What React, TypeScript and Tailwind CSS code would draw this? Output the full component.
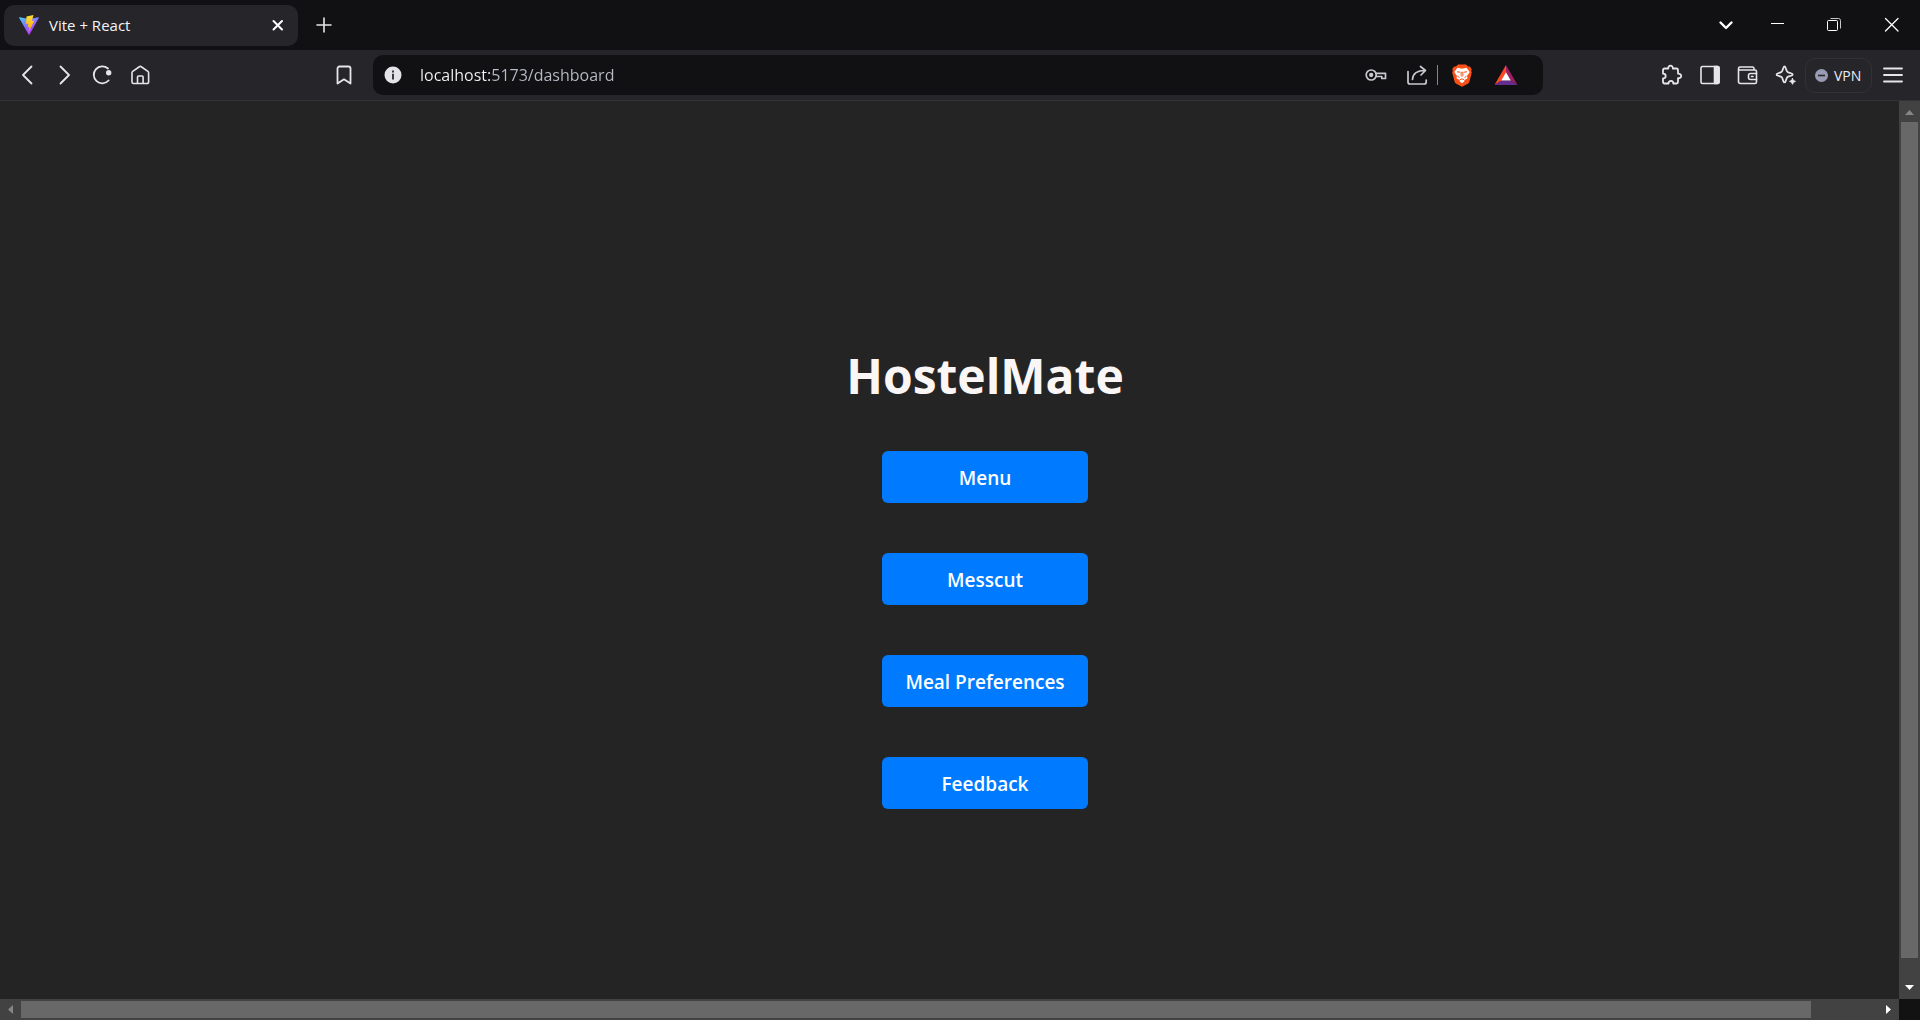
import type { ReactNode } from "react";

const LINKS = ["Menu", "Messcut", "Meal Preferences", "Feedback"];

function IconButton({ label, className = "w-[38px]", children }: { label: string; className?: string; children: ReactNode }) {
  return (
    <button type="button" aria-label={label} className={`flex h-10 shrink-0 items-center justify-center ${className}`}>
      {children}
    </button>
  );
}

function Stroke({ children, width = 1.6, className = "size-6 text-[#e6e6ea]" }: { children: ReactNode; width?: number; className?: string }) {
  return (
    <svg viewBox="0 0 24 24" fill="none" stroke="currentColor" strokeWidth={width} strokeLinecap="round" strokeLinejoin="round" className={className} aria-hidden="true">
      {children}
    </svg>
  );
}

function ViteLogo() {
  return (
    <svg viewBox="0 0 20 20" className="size-5 shrink-0" aria-hidden="true">
      <defs>
        <linearGradient id="vite-body" x1="0" y1="0" x2="0.6" y2="1">
          <stop offset="0" stopColor="#41d1ff" />
          <stop offset="0.55" stopColor="#8f6bff" />
          <stop offset="1" stopColor="#bd34fe" />
        </linearGradient>
        <linearGradient id="vite-bolt" x1="0" y1="0" x2="0" y2="1">
          <stop offset="0" stopColor="#ffdd35" />
          <stop offset="1" stopColor="#ffa800" />
        </linearGradient>
      </defs>
      <path d="M19.8 3 10.5 19.6a.5.5 0 0 1-.9 0L.2 3a.5.5 0 0 1 .5-.8L10 3.9l9.3-1.7a.5.5 0 0 1 .5.8Z" fill="url(#vite-body)" />
      <path d="M14.500.1 7.500 1.400 7 9.100l2.400-.5-.8 3.600 1.900-.5L9.500 17l6-11.500-2.600.5Z" fill="url(#vite-bolt)" />
    </svg>
  );
}

function BraveLogo() {
  return (
    <svg viewBox="0 0 20 23" className="h-[23px] w-5" aria-hidden="true">
      <path d="M6 .5h8L16 2.600l1.900-.1 1.900 2.700-.6 1.500.6 1.900-2.300 8.600c-.3 1.200-.9 1.900-1.700 2.500L10 22.800l-5.800-3.100c-.8-.6-1.400-1.300-1.700-2.500L.2 8.600l.6-1.900-.6-1.500 1.900-2.700 1.900.1Z" fill="#fb5015" />
      <path d="M5.500 3.800 10 4.800l4.500-1 3.200 4.200-2.700 4 .5 2.300-3 1.600-.3 1.600L10 19.300l-2.200-1.800-.3-1.600-3-1.600.5-2.300L2.300 8Z" fill="#fff" />
      <path d="M5 7.800 8.300 8.200M15 7.800 11.700 8.200M9.300 7.800 9 11.300l1 1.200 1-1.200-.3-3.500M5.500 12.200l2 1.300M14.500 12.200l-2 1.300M7.800 15.800l2.200-1 2.200 1" fill="none" stroke="#fb5015" strokeWidth="1" />
    </svg>
  );
}

function RewardsLogo() {
  return (
    <svg viewBox="0 0 24 20" className="h-5 w-6" aria-hidden="true">
      <path d="M12 0 .5 20 7.500 15.500 12 7.500Z" fill="#ff4724" />
      <path d="M12 0v7.500l4.500 8 7 4.500Z" fill="#9e1f63" />
      <path d="M.5 20 7.500 15.500h9l7 4.500Z" fill="#662d91" />
      <path d="m12 7.200 4.800 8.300H7.200Z" fill="#fff" />
    </svg>
  );
}

function TabStrip() {
  return (
    <header className="flex h-[50px] shrink-0 items-center bg-[#111113] pl-1">
      <div className="flex h-[41px] w-[294px] items-center rounded-[10px] bg-[#25252a] pr-1 pl-[15px]">
        <ViteLogo />
        <span className="ml-[10px] flex-1 text-[15px] text-[#f4f4f6]">Vite + React</span>
        <IconButton label="Close tab" className="w-8">
          <Stroke width={2} className="size-6 text-white">
            <path d="m7.500 8 8.500 8.500M16 8l-8.500 8.500" />
          </Stroke>
        </IconButton>
      </div>
      <IconButton label="New tab" className="ml-[7px] w-[38px]">
        <Stroke><path d="M12 5v14M5 12h14" /></Stroke>
      </IconButton>
      <div className="ml-auto flex">
        <IconButton label="Search tabs" className="w-[46px]">
          <Stroke width={2.4} className="size-6 text-white"><path d="m6.500 9.500 5.500 5.500 5.500-5.500" /></Stroke>
        </IconButton>
        <IconButton label="Minimize" className="w-[57px]">
          <svg viewBox="0 0 24 24" className="size-6" aria-hidden="true"><path d="M5 10h13v1H5Z" fill="#fff" /></svg>
        </IconButton>
        <IconButton label="Restore" className="w-[57px]">
          <svg viewBox="0 0 24 24" fill="none" stroke="#fff" className="size-6" aria-hidden="true">
            <path d="M7.500 5.500h8a2 2 0 0 1 2 2v8" stroke="#c8c8c8" />
            <rect x="4.500" y="7.500" width="10" height="10" rx="1" />
          </svg>
        </IconButton>
        <IconButton label="Close" className="w-[57px]">
          <Stroke width={1.300} className="size-6 text-white"><path d="m5.500 5.500 12.500 12.500M18 5.500 5.500 18" /></Stroke>
        </IconButton>
      </div>
    </header>
  );
}

function Toolbar() {
  return (
    <nav aria-label="Browser toolbar" className="flex h-[51px] shrink-0 items-center border-b border-[#323238] bg-[#25252a] px-2">
      <IconButton label="Back"><Stroke width={1.800}><path d="m16.500 3.500-8.500 8.500 8.500 8.500" /></Stroke></IconButton>
      <IconButton label="Forward"><Stroke width={1.800}><path d="m7.500 3.500 8.500 8.500-8.500 8.500" /></Stroke></IconButton>
      <IconButton label="Reload">
        <Stroke width={1.800}>
          <path d="M17 5.500a8.500 8.500 0 1 0 .6 12" />
          <circle cx="17.700" cy="9.800" r="1.800" fill="currentColor" />
        </Stroke>
      </IconButton>
      <IconButton label="Home">
        <Stroke>
          <path d="M3 9.800c0-.6.2-1 .7-1.400l7-4.900a1 1 0 0 1 1.200 0l7 4.900c.5.400.7.800.7 1.400v9.200a1.500 1.500 0 0 1-1.500 1.500H4.500A1.500 1.500 0 0 1 3 19Z" />
          <path d="M8.500 20v-6a1 1 0 0 1 1-1h3.600a1 1 0 0 1 1 1v6" />
        </Stroke>
      </IconButton>
      <IconButton label="Bookmark this tab" className="ml-[165px] w-[38px]">
        <Stroke width={1.800}><path d="M7.500 3.500h9a2 2 0 0 1 2 2v15L12 16.300l-6.500 4.200v-15a2 2 0 0 1 2-2Z" /></Stroke>
      </IconButton>
      <div className="ml-[10px] flex h-10 min-w-0 flex-1 items-center rounded-[10px] bg-[#111113] pr-[15px] pl-[11px]">
        <button type="button" aria-label="Site information" className="shrink-0">
          <svg viewBox="0 0 18 18" className="size-[18px]" aria-hidden="true">
            <circle cx="9" cy="9" r="8.500" fill="#e3e3e8" />
            <path d="M8 4.500h2v2H8ZM8 7.800h2v5.700H8Z" fill="#3a3a40" />
          </svg>
        </button>
        <input
          aria-label="Address"
          defaultValue="localhost:5173/dashboard"
          className="ml-[18px] min-w-0 flex-1 bg-[linear-gradient(90deg,#f5f5f7_70px,#b9bcc8_70px)] bg-clip-text text-[16px] text-transparent outline-none"
        />
        <IconButton label="Passwords" className="w-[42px]">
          <Stroke width={1.700} className="size-6 text-[#c9c9cf]">
            <circle cx="7.200" cy="12" r="5" />
            <circle cx="7.200" cy="12" r="1.300" fill="currentColor" />
            <path d="M12 10.300h9.500v5.200h-3.700v-2H12" />
          </Stroke>
        </IconButton>
        <IconButton label="Share" className="w-10">
          <Stroke width={1.700} className="size-6 text-[#c9c9cf]">
            <path d="M3 8.500V19a2 2 0 0 0 2 2h14.200a2 2 0 0 0 2-2v-2" />
            <path d="M7.500 16.500c.3-5.500 4-9 12.500-9M15.500 3.500l5 4-4.500 4.500" />
          </Stroke>
        </IconButton>
        <span className="mr-[2px] h-5 w-px bg-[#85858c]" />
        <IconButton label="Brave Shields" className="w-11"><BraveLogo /></IconButton>
        <IconButton label="Brave Rewards" className="w-11"><RewardsLogo /></IconButton>
      </div>
      <div className="ml-[110px] flex shrink-0 items-center">
        <IconButton label="Extensions">
          <Stroke width={1.800}>
            <path d="M4.500 5.500h3.800c-.2-1.600.7-2.900 2.200-2.900s2.500 1.300 2.300 2.900h3.700a1.500 1.500 0 0 1 1.500 1.500v3.600c1.700-.1 3.200.8 3.200 2.300s-1.500 2.500-3.200 2.300V19a1.500 1.500 0 0 1-1.500 1.500h-3.200c0-1.700-.8-2.600-2.200-2.600S8.500 18.900 8.500 20.500h-4A1.500 1.500 0 0 1 3 19v-3.500c1.700 0 2.700-.9 2.700-2.400S4.700 10.700 3 10.700V7a1.500 1.500 0 0 1 1.500-1.500Z" />
          </Stroke>
        </IconButton>
        <IconButton label="Side panel">
          <Stroke>
            <rect x="3" y="3.500" width="18" height="17" rx="1.500" />
            <path d="M16.500 3.500h3a1.500 1.500 0 0 1 1.500 1.500v14a1.500 1.500 0 0 1-1.500 1.500h-3Z" fill="currentColor" />
          </Stroke>
        </IconButton>
        <IconButton label="Wallet">
          <Stroke>
            <path d="M2.500 6v12.500a2 2 0 0 0 2 2H19a1.500 1.500 0 0 0 1.500-1.500V8.500A1.500 1.500 0 0 0 19 7H4A1.500 1.500 0 0 1 2.500 5.500 1.500 1.500 0 0 1 4 4h12.500A1.500 1.500 0 0 1 18 5.500V7" />
            <path d="M20.500 10.500h-6a2 2 0 0 0-2 2v2a2 2 0 0 0 2 2h6M15.500 13.500h1.500" />
          </Stroke>
        </IconButton>
        <IconButton label="Leo AI">
          <Stroke width={1.800}>
            <path d="M10.500 3.500c.6 0 .8.400 1 1l1.200 3.300c.3.800.7 1.200 1.500 1.500l3.500 1.200c1.200.4 1.200 1.600 0 2l-3.500 1.200c-.8.300-1.200.7-1.500 1.500l-1.200 3.300c-.4 1.200-1.600 1.200-2 0l-1.200-3.300c-.3-.8-.7-1.200-1.500-1.500l-3.300-1.200c-1.200-.4-1.200-1.600 0-2l3.300-1.200c.8-.3 1.200-.7 1.500-1.500l1.200-3.300c.2-.6.500-1 1-1Z" />
            <path d="m18.500 15.500.9 2 2 .9-2 .9-.9 2-.9-2-2-.9 2-.9Z" fill="currentColor" strokeWidth="1" />
          </Stroke>
        </IconButton>
        <button type="button" className="mr-[2px] flex h-[35px] w-[67px] items-center gap-[6px] rounded-[10px] border border-[#313137] pl-[9px] text-[14px] text-[#ececf0]">
          <svg viewBox="0 0 13 13" className="size-[13px]" aria-hidden="true">
            <circle cx="6.500" cy="6.500" r="6.500" fill="#9a9cb4" />
            <path d="M3 5.700h7v1.600H3Z" fill="#25252a" />
          </svg>
          VPN
        </button>
        <IconButton label="Menu">
          <Stroke width={1.800}><path d="M3 5.500h18M3 12h18M3 18.500h18" /></Stroke>
        </IconButton>
      </div>
    </nav>
  );
}

function Arrow({ d, className }: { d: string; className: string }) {
  return (
    <svg viewBox="0 0 21 21" className={`size-[21px] shrink-0 ${className}`} fill="currentColor" aria-hidden="true">
      <path d={d} />
    </svg>
  );
}

function VerticalScrollbar() {
  return (
    <div aria-hidden="true" className="flex w-[21px] shrink-0 flex-col items-center bg-[#424242]">
      <Arrow d="M10.500 9 15 14H6Z" className="text-[#868686]" />
      <div className="flex min-h-0 w-full flex-1 flex-col px-[2px]">
        <div className="h-[97.700%] bg-[#686868]" />
      </div>
      <Arrow d="M10.500 12 15 7H6Z" className="text-white" />
    </div>
  );
}

function HorizontalScrollbar() {
  return (
    <div aria-hidden="true" className="flex h-[21px] shrink-0 bg-[#424242]">
      <Arrow d="M8 10.500 13 6v9Z" className="text-[#868686]" />
      <div className="flex min-w-0 flex-1 py-[2px]">
        <div className="w-[96.400%] bg-[#686868]" />
      </div>
      <Arrow d="M13 10.500 8 6v9Z" className="text-white" />
      <div className="w-[21px] bg-[#121212]" />
    </div>
  );
}

function Dashboard() {
  return (
    <main className="min-w-0 flex-1 overflow-hidden">
      <div className="flex w-[calc(100%+71px)] flex-col items-center pt-[240px]">
        <h1 className="text-[48px] leading-[70px] font-bold text-[#faf6f6]">HostelMate</h1>
        <div className="mt-10 flex w-[206px] flex-col gap-[50px]">
          {LINKS.map((name) => (
            <button key={name} type="button" className="h-[52px] rounded-[6px] bg-[#007bff] pt-[2px] text-[19px] font-semibold whitespace-nowrap text-white">
              {name}
            </button>
          ))}
        </div>
      </div>
    </main>
  );
}

export default function App() {
  return (
    <div className="flex h-screen flex-col overflow-hidden bg-[#242424] font-['Open_Sans','Noto_Sans',sans-serif]">
      <TabStrip />
      <Toolbar />
      <div className="flex min-h-0 flex-1">
        <Dashboard />
        <VerticalScrollbar />
      </div>
      <HorizontalScrollbar />
    </div>
  );
}
